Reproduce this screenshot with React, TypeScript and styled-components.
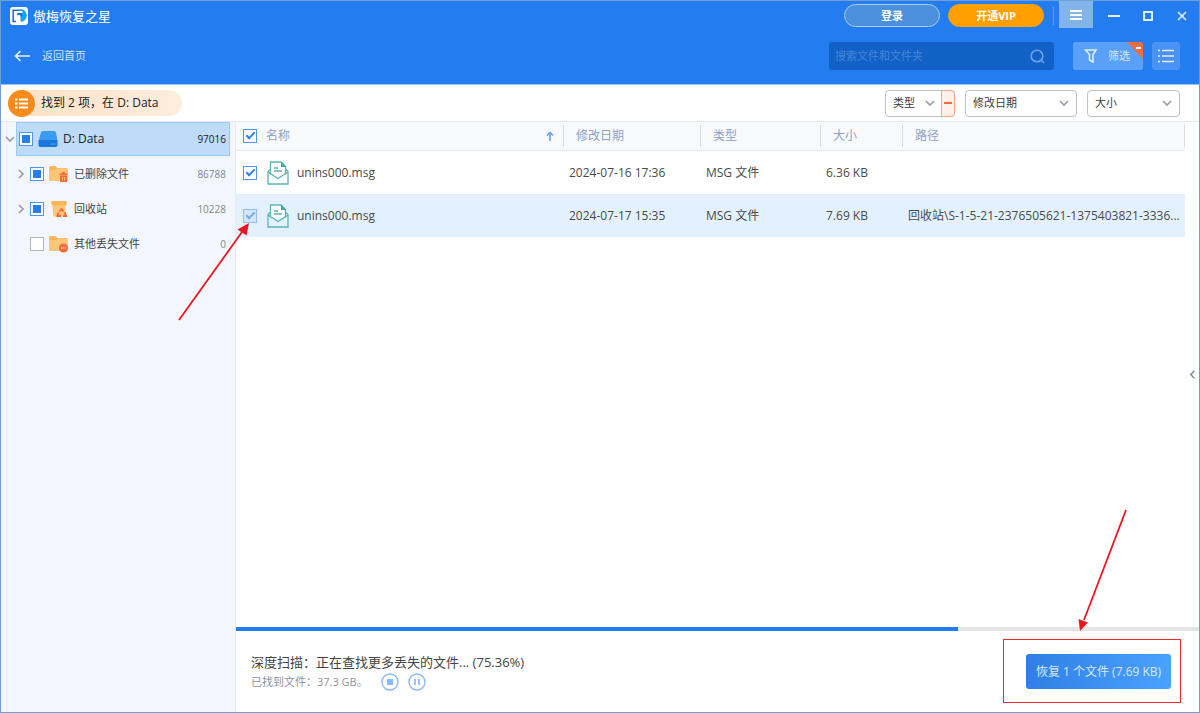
import React, { useEffect, useRef } from "react";
import styled, { createGlobalStyle, css } from "styled-components";

const GlobalStyle = createGlobalStyle`
  *, *::before, *::after { box-sizing: border-box; }
  body {
    margin: 0;
    font-family: "Open Sans", "Noto Sans CJK SC", sans-serif;
    font-size: 12px;
    line-height: 16px;
    color: #4a4a4a;
    background: #fff;
  }
  button, input, select { font: inherit; color: inherit; margin: 0; }
  button { cursor: pointer; padding: 0; border: 0; background: none; }
  svg { display: block; flex: none; }
`;

const Window = styled.div`
  display: flex;
  flex-direction: column;
  min-height: 100vh;
  position: relative;
  border: 1px solid #6f9fd8;
`;

const Header = styled.header`
  background: #237cf0;
  color: #fff;
`;

const TitleBar = styled.div`
  display: flex;
  align-items: center;
  height: 29px;
  padding: 0 9px;
`;

const AppTitle = styled.h1`
  margin: 0 auto 0 5px;
  font-size: 13px;
  line-height: 18px;
  font-weight: 400;
`;

const PillButton = styled.button<{ $vip?: boolean }>`
  width: 96px;
  height: 23px;
  margin-right: 8px;
  border-radius: 12px;
  border: 1px solid ${(p) => (p.$vip ? "#ffa000" : "#a9cdf5")};
  background: ${(p) => (p.$vip ? "#ffa000" : "#4a90dc")};
  font-size: 11px;
  line-height: 16px;
  font-weight: 700;
`;

const Divider = styled.span`
  width: 1px;
  height: 18px;
  margin: 0 5px 0 1px;
  background: #5e9ef0;
`;

const MenuButton = styled.button`
  display: grid;
  place-items: center;
  align-self: flex-start;
  width: 34px;
  height: 27px;
  margin-right: 4px;
  background: #82b4ea;
`;

const WindowButton = styled.button`
  display: grid;
  place-items: center;
  width: 34px;
  height: 28px;
  &:last-child { margin-right: -9px; }
`;

const NavBar = styled.div`
  display: flex;
  align-items: center;
  padding: 12px 19px 14px 13px;
`;

const BackLink = styled.a`
  display: flex;
  align-items: center;
  gap: 12px;
  margin-right: auto;
  color: #cfe2fd;
  font-size: 11px;
  text-decoration: none;
`;

const SearchBox = styled.label`
  display: flex;
  align-items: center;
  width: 225px;
  height: 28px;
  margin-right: 19px;
  padding: 0 9px 0 6px;
  border-radius: 3px;
  background: #1261c6;
  input {
    flex: 1;
    min-width: 0;
    padding: 0;
    border: 0;
    outline: 0;
    background: none;
    font-size: 11px;
  }
  input::placeholder { color: #4286db; opacity: 1; }
`;

const FilterButton = styled.button`
  display: flex;
  align-items: center;
  gap: 10px;
  position: relative;
  width: 70px;
  height: 28px;
  margin-right: 9px;
  padding-left: 11px;
  border-radius: 3px;
  overflow: hidden;
  background: #5a9ff8;
  color: #d5e7fe;
  font-size: 11px;
`;

const Corner = styled.svg`
  position: absolute;
  top: 0;
  right: 0;
`;

const ViewButton = styled.button`
  display: grid;
  place-items: center;
  width: 28px;
  height: 28px;
  border-radius: 3px;
  background: #4a92f3;
`;

const Toolbar = styled.div`
  display: flex;
  align-items: center;
  gap: 10px;
  height: 38px;
  padding: 0 19px 0 7px;
  border-top: 1px solid #9ac3f8;
  border-bottom: 1px solid #e4e6f0;
`;

const ResultBadge = styled.div`
  display: flex;
  align-items: center;
  gap: 6px;
  height: 26px;
  margin-right: auto;
  padding-right: 23px;
  border-radius: 13px;
  background: linear-gradient(90deg, #fde0c4, #feeddd);
  color: #222;
`;

const BadgeIcon = styled.span`
  display: grid;
  place-items: center;
  width: 27px;
  height: 27px;
  border-radius: 50%;
  background: #f98b1b;
`;

const SelectFrame = styled.div<{ $width: number }>`
  display: flex;
  width: ${(p) => p.$width}px;
  height: 27px;
  border: 1px solid #bcc0cb;
  border-radius: 4px;
`;

const SelectField = styled.label`
  display: grid;
  flex: 1;
  align-items: center;
  min-width: 0;
  select, svg { grid-area: 1 / 1; }
  svg { justify-self: end; margin-right: 7px; pointer-events: none; }
  select {
    appearance: none;
    width: 100%;
    height: 25px;
    padding: 0 0 0 7px;
    border: 0;
    outline: 0;
    background: none;
    font-size: 11px;
    color: #3c3c3c;
  }
`;

const ClearButton = styled.button`
  display: grid;
  place-items: center;
  width: 14px;
  margin: -1px;
  border: 1px solid #f9a38b;
  border-radius: 0 4px 4px 0;
  background: #fff0ea;
`;

const Body = styled.div`
  display: flex;
  flex: 1;
`;

const Sidebar = styled.nav`
  display: flex;
  flex-direction: column;
  width: 235px;
  border-right: 1px solid #e6ebf4;
  background: #f3f7fd;
`;

const TreeRow = styled.div<{ $nested?: boolean }>`
  display: flex;
  height: 34px;
  margin: 0 5px 1px 0;
  padding-left: ${(p) => (p.$nested ? 11 : 0)}px;
`;

const Toggle = styled.button`
  display: grid;
  place-items: center;
  width: 15px;
  padding-left: 2px;
`;

const TreeLabel = styled.label<{ $active?: boolean }>`
  display: flex;
  flex: 1;
  align-items: center;
  gap: 5px;
  padding: 0 3px 0 2px;
  border: 1px solid transparent;
  font-size: 11px;
  color: #444;
  ${(p) =>
    p.$active &&
    css`
      border-color: #98cbf9;
      background: #bedbf9;
      font-size: 12px;
      color: #222;
    `}
`;

const Count = styled.span<{ $active?: boolean }>`
  margin-left: auto;
  font-size: 10px;
  color: ${(p) => (p.$active ? "#222" : "#858585")};
`;

const CheckBox = styled.input<{ $soft?: boolean }>`
  appearance: none;
  display: grid;
  place-items: center;
  flex: none;
  width: 14px;
  height: 14px;
  border: 1px solid #b3b7bd;
  background: #fff;
  &:checked, &:indeterminate { border-color: ${(p) => (p.$soft ? "#92bdf5" : "#5096ef")}; }
  &:checked { background: ${(p) => (p.$soft ? "#d3e6fc" : "#fff")}; }
  &:indeterminate::after {
    content: "";
    width: 8px;
    height: 8px;
    background: #2a7de8;
  }
  &:checked::after {
    content: "";
    width: 9px;
    height: 5px;
    margin-bottom: 3px;
    border: solid ${(p) => (p.$soft ? "#77abf1" : "#3080ea")};
    border-width: 0 0 2px 2px;
    transform: rotate(-45deg);
  }
`;

const Main = styled.main`
  display: flex;
  flex: 1;
  flex-direction: column;
  min-width: 0;
`;

const Content = styled.div`
  display: flex;
  flex: 1;
`;

const TableArea = styled.div`
  flex: 1;
  min-width: 0;
`;

const FileTable = styled.table`
  width: 100%;
  table-layout: fixed;
  border-collapse: separate;
  border-spacing: 0;
`;

const HeadCell = styled.th<{ $width?: number }>`
  width: ${(p) => (p.$width ? `${p.$width}px` : "auto")};
  height: 29px;
  padding: 0;
  border-bottom: 1px solid #e6e9f2;
  background: #f8f9fb;
  color: #8ea2c6;
  font-weight: 400;
  text-align: left;
`;

const HeadInner = styled.div<{ $check?: boolean }>`
  display: flex;
  align-items: center;
  gap: 9px;
  height: 22px;
  padding: 0 9px 0 ${(p) => (p.$check ? 7 : 12)}px;
  border-right: 1px solid #d9dce3;
  svg { margin-left: auto; }
`;

const FileRow = styled.tr<{ $selected?: boolean }>`
  height: 43px;
  background: ${(p) => (p.$selected ? "#e3f1fe" : "#fff")};
`;

const Cell = styled.td`
  padding: 0 5px;
  overflow: hidden;
  white-space: nowrap;
  text-overflow: ellipsis;
`;

const NameLabel = styled.label`
  display: flex;
  align-items: center;
  padding-left: 2px;
  svg { margin: 0 8px 0 10px; }
`;

const CollapseButton = styled.button`
  display: grid;
  place-items: center;
  width: 14px;
`;

const Progress = styled.progress`
  appearance: none;
  display: block;
  width: 100%;
  height: 4px;
  border: 0;
  background: #e4e4e4;
  &::-webkit-progress-bar { background: #e4e4e4; }
  &::-webkit-progress-value { background: #237cf0; }
`;

const Footer = styled.footer`
  display: flex;
  align-items: flex-start;
  justify-content: space-between;
  position: relative;
  padding: 8px 18px 9px 15px;
`;

const ScanInfo = styled.div`
  padding-top: 13px;
`;

const ScanTitle = styled.p`
  margin: 0;
  font-size: 13px;
  line-height: 20px;
  color: #444;
`;

const ScanDetail = styled.div`
  display: flex;
  align-items: center;
  gap: 9px;
  height: 20px;
  font-size: 11px;
  color: #8d929b;
`;

const FoundSize = styled.span`
  margin-right: 4px;
`;

const Highlight = styled.div`
  padding: 14px 9px 13px 22px;
  border: 1px solid #f0282e;
`;

const RecoverButton = styled.button`
  display: block;
  width: 145px;
  height: 35px;
  border-radius: 3px;
  background: linear-gradient(90deg, #2f7fe6, #4aa2fe);
  color: #d8e9fe;
  white-space: nowrap;
`;

const CheckboxArrow = styled.svg`
  position: absolute;
  top: 220px;
  left: 175px;
  pointer-events: none;
`;

const RecoverArrow = styled.svg`
  position: absolute;
  right: 68px;
  bottom: 80px;
  pointer-events: none;
`;

const Chevron = ({ dir = "down", size = 10, color = "#969ca8" }: { dir?: "down" | "right" | "left"; size?: number; color?: string }) => (
  <svg width={size} height={size} viewBox="0 0 10 10" fill="none" stroke={color} strokeWidth="1.7">
    <path d={dir === "down" ? "M1 3l4 4 4-4" : dir === "right" ? "M3 1l4 4-4 4" : "M7 1L3 5l4 4"} />
  </svg>
);

const Logo = () => (
  <svg width="18" height="18" viewBox="0 0 18 18">
    <defs>
      <linearGradient id="logo" x1="0" y1="0" x2="1" y2="0">
        <stop offset="0" stopColor="#1663dc" />
        <stop offset="1" stopColor="#16b4f5" />
      </linearGradient>
    </defs>
    <rect width="18" height="18" rx="3" fill="#fff" />
    <path
      d="M6 14.500H3.200V3.200H9.500a5 5 0 0 1 2.500 9.800V14.500"
      fill="none"
      stroke="url(#logo)"
      strokeWidth="1.500"
    />
    <path d="M9.500 3a5.500 5.500 0 0 1 2.500 11.500H10.500V7.500H7.500V6h5V4z" fill="#16a4f2" />
    <path d="M8 8.200V7h3v2.500" fill="none" stroke="#1663dc" strokeWidth="1.400" />
  </svg>
);

const Folder = ({ kind }: { kind: "deleted" | "lost" }) => (
  <svg width="20" height="18" viewBox="0 0 20 18">
    <path d="M0 3a2 2 0 0 1 2-2h4.500l2 2H17a2 2 0 0 1 2 2v9a2 2 0 0 1-2 2H2a2 2 0 0 1-2-2z" fill="#fdb55c" />
    <path d="M0 5.500l8-1 1-1H17a2 2 0 0 1 2 2V14a2 2 0 0 1-2 2H2a2 2 0 0 1-2-2z" fill="#fec678" />
    {kind === "deleted" ? (
      <g fill="#f9693a">
        <path d="M10.500 8.500h2.500V7h3v1.500h2.500V10h-8z" />
        <path d="M11 10.500h7v6.500h-7z" />
        <path d="M13.500 12v3.500M15.500 12v3.500" stroke="#fec078" />
      </g>
    ) : (
      <g>
        <circle cx="14.500" cy="13" r="4.500" fill="#f9693a" />
        <path d="M12 13h5" stroke="#ffd0b0" strokeWidth="1.300" strokeDasharray="1.300 .5" />
      </g>
    )}
  </svg>
);

const RecycleBin = () => (
  <svg width="20" height="18" viewBox="0 0 20 18">
    <path d="M3.500 4h13v12.500H6a2 2 0 0 1-2-2z" fill="#fec678" />
    <path d="M3 1h14l1 1-1 3.500H3L2 2z" fill="#fdb55c" />
    <g fill="none" stroke="#f9693a" strokeWidth="2">
      <path d="M10.500 11.500l2-2.500 2 2.500" />
      <path d="M9.500 12.500L8.500 16H12M15.500 12.500l1.500 3.500h-3" />
    </g>
  </svg>
);

const Drive = () => (
  <svg width="20" height="18" viewBox="0 0 20 18">
    <path d="M5 1h11q1.500 0 2 1.500L19.500 11h-19L3 2.500Q3.500 1 5 1z" fill="#3a9bf1" />
    <path d="M.5 11q0-1 1-1h17q1 0 1 1v4q0 2-2 2h-15q-2 0-2-2z" fill="#1a78dd" />
    <path d="M13 14h1.500M15.500 14H17" stroke="#6db2f6" />
  </svg>
);

const MailFile = () => (
  <svg width="22" height="24" viewBox="0 0 22 24" fill="none" stroke="#5cb5b2" strokeWidth="1.300">
    <path d="M3.500 13.500V1h10.500l4.500 4.500v8" fill="#fff" />
    <path d="M14 .5v5.500h5.500z" fill="#42a8a4" stroke="none" />
    <path d="M3 8.500L1 10.500V23h20V10.500l-2-2" />
    <path d="M1 11l10 6.500L21 11" />
    <path d="M7 7h4M7 10h8" />
  </svg>
);

const ListGlyph = ({ size }: { size: number }) => (
  <svg width={size} height={size} viewBox="0 0 16 16" stroke="#e3efff" strokeWidth="1.500">
    <path d="M0 2.500h2M0 8h2M0 13.500h2M4 2.500H16M4 8H16M4 13.500H16" />
  </svg>
);

function MixedCheckBox() {
  const ref = useRef<HTMLInputElement>(null);
  useEffect(() => {
    if (ref.current) ref.current.indeterminate = true;
  }, []);
  return <CheckBox type="checkbox" ref={ref} />;
}

const folders = [
  { name: "已删除文件", count: 86788, icon: <Folder kind="deleted" />, filled: true },
  { name: "回收站", count: 10228, icon: <RecycleBin />, filled: true },
  { name: "其他丢失文件", count: 0, icon: <Folder kind="lost" />, filled: false },
];

const files = [
  { name: "unins000.msg", date: "2024-07-16 17:36", type: "MSG 文件", size: "6.36 KB", path: "", selected: false },
  {
    name: "unins000.msg",
    date: "2024-07-17 15:35",
    type: "MSG 文件",
    size: "7.69 KB",
    path: "回收站\\S-1-5-21-2376505621-1375403821-3336...",
    selected: true,
  },
];

function FilterSelect({ label, width, clearable }: { label: string; width: number; clearable?: boolean }) {
  return (
    <SelectFrame $width={width}>
      <SelectField>
        <select aria-label={label}>
          <option>{label}</option>
        </select>
        <Chevron />
      </SelectField>
      {clearable && (
        <ClearButton aria-label="清除">
          <svg width="8" height="2"><path d="M0 1h8" stroke="#f26b43" strokeWidth="2" /></svg>
        </ClearButton>
      )}
    </SelectFrame>
  );
}

export default function App() {
  return (
    <Window>
      <GlobalStyle />
      <Header>
        <TitleBar>
          <Logo />
          <AppTitle>傲梅恢复之星</AppTitle>
          <PillButton>登录</PillButton>
          <PillButton $vip>开通VIP</PillButton>
          <Divider />
          <MenuButton aria-label="菜单">
            <svg width="12" height="10" stroke="#fff" strokeWidth="2"><path d="M0 1h12M0 5h12M0 9h12" /></svg>
          </MenuButton>
          <WindowButton aria-label="最小化">
            <svg width="12" height="2"><path d="M0 1h12" stroke="#e3efff" strokeWidth="2" /></svg>
          </WindowButton>
          <WindowButton aria-label="最大化">
            <svg width="10" height="10"><path d="M1 1h8v8H1z" fill="none" stroke="#e3efff" strokeWidth="2" /></svg>
          </WindowButton>
          <WindowButton aria-label="关闭">
            <svg width="10" height="10"><path d="M1 1l8 8M9 1L1 9" stroke="#e3efff" strokeWidth="1.600" /></svg>
          </WindowButton>
        </TitleBar>
        <NavBar>
          <BackLink href="#">
            <svg width="16" height="12" viewBox="0 0 16 12" fill="none" stroke="#e3efff" strokeWidth="1.700">
              <path d="M6.500 1l-5 5 5 5M1.500 6H16" />
            </svg>
            返回首页
          </BackLink>
          <SearchBox>
            <input type="text" placeholder="搜索文件和文件夹" aria-label="搜索文件和文件夹" />
            <svg width="15" height="15" viewBox="0 0 15 15" fill="none" stroke="#6da6ee" strokeWidth="1.500">
              <circle cx="7" cy="7" r="5.800" />
              <path d="M11 11l3 3" />
            </svg>
          </SearchBox>
          <FilterButton>
            <svg width="14" height="14" viewBox="0 0 14 14" fill="none" stroke="#e3efff" strokeWidth="1.600">
              <path d="M1.500 1h10.500L9 5.500V13l-3.500-2V5.500z" />
            </svg>
            筛选
            <Corner width="16" height="17">
              <path d="M0 0h16v17z" fill="#f26b43" />
              <path d="M9 6h5" stroke="#fff" strokeWidth="2" />
            </Corner>
          </FilterButton>
          <ViewButton aria-label="列表视图"><ListGlyph size={16} /></ViewButton>
        </NavBar>
      </Header>
      <Toolbar>
        <ResultBadge>
          <BadgeIcon>
            <svg width="13" height="11" stroke="#fff" strokeWidth="2">
              <path d="M0 1.500h2.500M0 5.500h2.500M0 9.500h2.500M4 1.500H13M4 5.500H13M4 9.500H13" />
            </svg>
          </BadgeIcon>
          找到 2 项，在 D: Data
        </ResultBadge>
        <FilterSelect label="类型" width={70} clearable />
        <FilterSelect label="修改日期" width={112} />
        <FilterSelect label="大小" width={93} />
      </Toolbar>
      <Body>
        <Sidebar>
          <TreeRow>
            <Toggle aria-label="折叠"><Chevron /></Toggle>
            <TreeLabel $active>
              <MixedCheckBox />
              <Drive />
              D: Data
              <Count $active>97016</Count>
            </TreeLabel>
          </TreeRow>
          {folders.map((f) => (
            <TreeRow key={f.name} $nested>
              <Toggle aria-label="展开">{f.filled && <Chevron dir="right" />}</Toggle>
              <TreeLabel>
                {f.filled ? <MixedCheckBox /> : <CheckBox type="checkbox" />}
                {f.icon}
                {f.name}
                <Count>{f.count}</Count>
              </TreeLabel>
            </TreeRow>
          ))}
        </Sidebar>
        <Main>
          <Content>
            <TableArea>
              <FileTable>
                <thead>
                  <tr>
                    <HeadCell $width={328}>
                      <HeadInner $check>
                        <CheckBox type="checkbox" aria-label="全选" defaultChecked />
                        名称
                        <svg width="8" height="10" fill="none" stroke="#6fa5ea" strokeWidth="1.700">
                          <path d="M4 10V1.500M1 4.500l3-3 3 3" />
                        </svg>
                      </HeadInner>
                    </HeadCell>
                    <HeadCell $width={137}><HeadInner>修改日期</HeadInner></HeadCell>
                    <HeadCell $width={120}><HeadInner>类型</HeadInner></HeadCell>
                    <HeadCell $width={82}><HeadInner>大小</HeadInner></HeadCell>
                    <HeadCell><HeadInner>路径</HeadInner></HeadCell>
                  </tr>
                </thead>
                <tbody>
                  {files.map((f) => (
                    <FileRow key={f.date} $selected={f.selected}>
                      <Cell>
                        <NameLabel>
                          <CheckBox type="checkbox" defaultChecked $soft={f.selected} />
                          <MailFile />
                          {f.name}
                        </NameLabel>
                      </Cell>
                      <Cell>{f.date}</Cell>
                      <Cell>{f.type}</Cell>
                      <Cell>{f.size}</Cell>
                      <Cell>{f.path}</Cell>
                    </FileRow>
                  ))}
                </tbody>
              </FileTable>
            </TableArea>
            <CollapseButton aria-label="展开预览"><Chevron dir="left" size={9} color="#8391a5" /></CollapseButton>
          </Content>
          <Progress value={75} max={100} aria-label="扫描进度" />
          <Footer>
            <ScanInfo>
              <ScanTitle>深度扫描：正在查找更多丢失的文件... (75.36%)</ScanTitle>
              <ScanDetail>
                <FoundSize>已找到文件：37.3 GB。</FoundSize>
                <button aria-label="停止">
                  <svg width="18" height="18" fill="#8abaf9">
                    <circle cx="9" cy="9" r="8" fill="#fff" stroke="#8abaf9" strokeWidth="1.400" />
                    <path d="M6 6h6v6H6z" />
                  </svg>
                </button>
                <button aria-label="暂停">
                  <svg width="18" height="18" stroke="#8abaf9">
                    <circle cx="9" cy="9" r="8" fill="#fff" strokeWidth="1.400" />
                    <path d="M7 6v6M11 6v6" strokeWidth="1.700" />
                  </svg>
                </button>
              </ScanDetail>
            </ScanInfo>
            <Highlight>
              <RecoverButton>恢复 1 个文件 (7.69 KB)</RecoverButton>
            </Highlight>
            <RecoverArrow width="60" height="124" viewBox="0 0 60 124">
              <path d="M55 2L13 112" stroke="#ec1620" strokeWidth="1.800" />
              <path d="M9 123L7.500 111l9.500 3.500z" fill="#ec1620" />
            </RecoverArrow>
          </Footer>
        </Main>
      </Body>
      <CheckboxArrow width="76" height="102" viewBox="0 0 76 102">
        <path d="M3 99L66 11" stroke="#ec1620" strokeWidth="1.800" />
        <path d="M73 2L61.500 8.500l9 6z" fill="#ec1620" />
      </CheckboxArrow>
    </Window>
  );
}
